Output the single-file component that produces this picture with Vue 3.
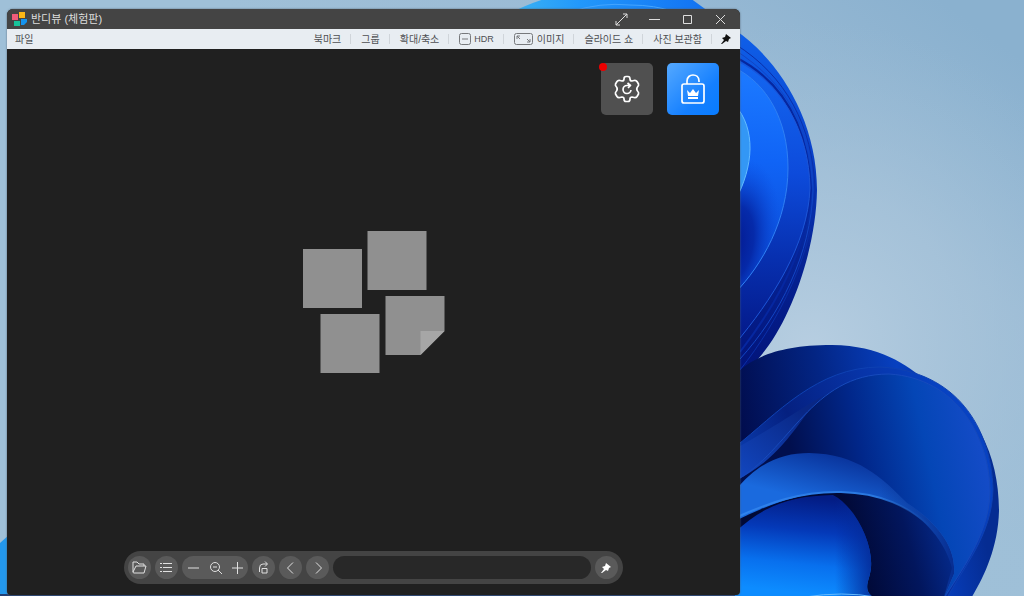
<script setup>
import { ref } from 'vue'

const fileLabel = '파일'
const title = '반디뷰 (체험판)'
const menus = [
  { label: '북마크' },
  { label: '그룹' },
  { label: '확대/축소' },
  { label: 'HDR', icon: 'hdr' },
  { label: '이미지', icon: 'fit' },
  { label: '슬라이드 쇼' },
  { label: '사진 보관함' },
]
const position = ref('')
</script>

<template>
  <div class="desktop">
    <svg class="wallpaper" viewBox="0 0 1024 596" preserveAspectRatio="xMaxYMin slice" aria-hidden="true">
      <defs>
        <linearGradient id="sky" gradientUnits="userSpaceOnUse" x1="1024" y1="60" x2="780" y2="400">
          <stop offset="0" stop-color="#8ab1cf" />
          <stop offset="0.5" stop-color="#9bbbd5" />
          <stop offset="1" stop-color="#9fc0d8" />
        </linearGradient>
        <radialGradient id="skyShade" gradientUnits="userSpaceOnUse" cx="810" cy="350" r="330">
          <stop offset="0" stop-color="#b7cee1" />
          <stop offset="0.5" stop-color="#a8c4da" stop-opacity="0.7" />
          <stop offset="1" stop-color="#9bbdd6" stop-opacity="0" />
        </radialGradient>
        <linearGradient id="topArc" x1="0" x2="1" y1="0" y2="0">
          <stop offset="0" stop-color="#3db4f2" />
          <stop offset="0.35" stop-color="#2298fb" />
          <stop offset="1" stop-color="#1170f2" />
        </linearGradient>
        <linearGradient id="outer" gradientUnits="userSpaceOnUse" x1="0" y1="30" x2="0" y2="370">
          <stop offset="0" stop-color="#0f60ea" />
          <stop offset="0.35" stop-color="#0a43cc" />
          <stop offset="0.65" stop-color="#062496" />
          <stop offset="1" stop-color="#02147a" />
        </linearGradient>
        <linearGradient id="middle" gradientUnits="userSpaceOnUse" x1="760" y1="60" x2="750" y2="340">
          <stop offset="0" stop-color="#1468f2" />
          <stop offset="0.4" stop-color="#0d4bdb" />
          <stop offset="0.7" stop-color="#0730b0" />
          <stop offset="1" stop-color="#041989" />
        </linearGradient>
        <linearGradient id="inner" gradientUnits="userSpaceOnUse" x1="770" y1="80" x2="755" y2="280">
          <stop offset="0" stop-color="#1b78ff" />
          <stop offset="0.4" stop-color="#1064f6" />
          <stop offset="1" stop-color="#0a48d2" />
        </linearGradient>
        <radialGradient id="innerShade" gradientUnits="userSpaceOnUse" cx="0" cy="0" r="1" gradientTransform="translate(732 245) rotate(12) scale(46 88)">
          <stop offset="0" stop-color="#03178c" />
          <stop offset="0.45" stop-color="#0423a0" stop-opacity="0.85" />
          <stop offset="1" stop-color="#0a4ade" stop-opacity="0" />
        </radialGradient>
        <linearGradient id="back" gradientUnits="userSpaceOnUse" x1="740" y1="440" x2="960" y2="400">
          <stop offset="0" stop-color="#010c4c" />
          <stop offset="0.4" stop-color="#032584" />
          <stop offset="0.75" stop-color="#0740c0" />
          <stop offset="1" stop-color="#052c92" />
        </linearGradient>
        <linearGradient id="fold" gradientUnits="userSpaceOnUse" x1="740" y1="460" x2="930" y2="370">
          <stop offset="0" stop-color="#0a3bac" />
          <stop offset="0.3" stop-color="#052080" />
          <stop offset="0.7" stop-color="#0734a8" />
          <stop offset="1" stop-color="#0742c2" />
        </linearGradient>
        <linearGradient id="bowl" gradientUnits="userSpaceOnUse" x1="800" y1="490" x2="990" y2="450">
          <stop offset="0" stop-color="#010f4e" />
          <stop offset="0.35" stop-color="#01278a" />
          <stop offset="0.68" stop-color="#0446b6" />
          <stop offset="1" stop-color="#164cc9" />
        </linearGradient>
        <linearGradient id="lip" gradientUnits="userSpaceOnUse" x1="740" y1="480" x2="800" y2="410">
          <stop offset="0" stop-color="#1247c0" />
          <stop offset="1" stop-color="#092785" />
        </linearGradient>
        <linearGradient id="band" gradientUnits="userSpaceOnUse" x1="820" y1="453" x2="808" y2="500">
          <stop offset="0" stop-color="#0a369f" />
          <stop offset="1" stop-color="#1a6ade" />
        </linearGradient>
        <linearGradient id="bandFade" gradientUnits="userSpaceOnUse" x1="880" y1="0" x2="955" y2="0">
          <stop offset="0" stop-color="#06297f" stop-opacity="0" />
          <stop offset="1" stop-color="#072c90" />
        </linearGradient>
        <linearGradient id="rim" gradientUnits="userSpaceOnUse" x1="740" y1="0" x2="935" y2="0">
          <stop offset="0" stop-color="#2f83ee" />
          <stop offset="0.7" stop-color="#2a78e0" />
          <stop offset="1" stop-color="#1b50a8" stop-opacity="0" />
        </linearGradient>
        <linearGradient id="cave" gradientUnits="userSpaceOnUse" x1="860" y1="570" x2="955" y2="545">
          <stop offset="0" stop-color="#010936" />
          <stop offset="0.55" stop-color="#02165d" />
          <stop offset="1" stop-color="#052c90" />
        </linearGradient>
        <linearGradient id="core" gradientUnits="userSpaceOnUse" x1="800" y1="496" x2="790" y2="592">
          <stop offset="0" stop-color="#031c84" />
          <stop offset="0.35" stop-color="#0439b8" />
          <stop offset="0.7" stop-color="#0870ee" />
          <stop offset="1" stop-color="#0d8cff" />
        </linearGradient>
        <linearGradient id="coreShade" gradientUnits="userSpaceOnUse" x1="835" y1="0" x2="876" y2="0">
          <stop offset="0" stop-color="#042a9c" stop-opacity="0" />
          <stop offset="1" stop-color="#042a96" />
        </linearGradient>
      </defs>

      <rect width="1024" height="596" fill="url(#sky)" />
      <rect width="1024" height="596" fill="url(#skyShade)" />
      <path d="M508 14Q530 3 548-2H690L712 14Z" fill="url(#topArc)" />
      <path d="M570 12Q600 2 630 5Q655 5 675 12" fill="none" stroke="#45a5ff" />
      <path d="M0 543L10 534V596H0Z" fill="#2398ed" />
      <rect y="594" width="745" height="2" fill="#233f73" />

      <path d="M735 378V30C777 58 817 118 817 190C816 252 789 325 758 359L735 390Z" fill="url(#outer)" />
      <path d="M735 44C786 76 813 126 815 190C814 252 779 321 740 370" fill="none" stroke="#0a2fa9" />
      <path d="M735 50C786 83 811 126 813 190C811 254 780 315 740 359" fill="none" stroke="#1245c4" />
      <path d="M735 57C783 81 808 126 811 190C807 248 778 303 740 352" fill="none" stroke="#0627a0" stroke-width="2" />
      <path d="M735 60C782 82 809 132 810 188C808 245 771 301 735 344Z" fill="url(#middle)" stroke="#1c56d8" />
      <path d="M735 68C766 83 788 119 788 168C788 220 762 265 735 293Z" fill="url(#inner)" />
      <path d="M735 68C766 83 788 119 788 168C788 220 762 265 735 293Z" fill="url(#innerShade)" stroke="#2f80f4" />
      <path d="M735 105C756 129 754 166 735 201Z" fill="#3397f5" stroke="#64bcff" />

      <path d="M735 375C748 361 773 345 832 345C882 346 903 363 930 383C976 408 999 454 999 511C998 549 983 579 970 600H735Z" fill="url(#back)" />
      <path d="M735 447C777 414 817 367 880 367C956 371 991 427 993 489C992 536 963 567 946 600H735Z" fill="url(#fold)" stroke="#0e41b2" />
      <path d="M735 481C787 451 811 374 889 374C957 378 990 438 990 492C989 536 959 573 943 600H735Z" fill="url(#bowl)" />
      <path d="M735 449C769 430 799 410 826 394C801 411 790 454 735 481Z" fill="url(#lip)" />
      <path d="M735 481C790 451 811 374 889 374C957 378 990 438 990 492C989 536 959 573 943 600" fill="none" stroke="#164abc" />
      <path d="M735 491C758 462 783 453 809 453C858 454 881 477 907 503C942 526 956 550 954 574L943 600L735 540Z" fill="url(#band)" />
      <path d="M735 491C758 462 783 453 809 453C858 454 881 477 907 503C942 526 956 550 954 574L943 600L735 540Z" fill="url(#bandFade)" />
      <path d="M735 521C768 505 801 491 841 492C908 494 942 532 952 568L943 600H735Z" fill="url(#cave)" />
      <path d="M735 518C768 503 801 491 841 492C882 493 908 507 929 525" fill="none" stroke="url(#rim)" stroke-width="2" />
      <path d="M735 532C765 505 790 496 833 495C856 507 873 544 871 567C870 582 860 590 877 600H735Z" fill="url(#core)" />
      <path d="M735 532C765 505 790 496 833 495C856 507 873 544 871 567C870 582 860 590 877 600H735Z" fill="url(#coreShade)" />
      <path d="M805 597Q842 591 876 597" fill="none" stroke="#65baff" />
    </svg>

    <main class="window">
      <header class="titlebar">
        <svg class="app-icon" width="15" height="15" viewBox="0 0 15 15" aria-hidden="true">
          <path fill="#f15b7b" d="M0 2h6v6H0z" />
          <path fill="#fbb615" d="M7 0h6v6H7z" />
          <path fill="#18c39a" d="M2 9h6v5H2z" />
          <path fill="#1593ee" d="M9 7h6v3l-3 3H9z" />
        </svg>
        <h1>{{ title }}</h1>
        <div class="controls">
          <button aria-label="전체 화면"><svg width="13" height="13" viewBox="0 0 13 13"><path d="M8 1h4v4M12 1L1 12M1 8v4h4" /></svg></button>
          <button aria-label="최소화"><svg width="13" height="13" viewBox="0 0 13 13"><path d="M1 6.500h11" /></svg></button>
          <button aria-label="최대화"><svg width="13" height="13" viewBox="0 0 13 13"><path d="M2.500 2.500h8v8h-8z" /></svg></button>
          <button aria-label="닫기"><svg width="13" height="13" viewBox="0 0 13 13"><path d="M2 2l9 9M11 2L2 11" /></svg></button>
        </div>
      </header>

      <nav class="menubar">
        <button class="menu file"><span>{{ fileLabel }}</span></button>
        <button v-for="m in menus" :key="m.label" class="menu item" :class="m.icon">
          <svg v-if="m.icon === 'hdr'" width="12" height="12" viewBox="0 0 12 12" aria-hidden="true">
            <rect x="0.500" y="0.500" width="11" height="11" rx="2" /><path d="M3 6h6" />
          </svg>
          <svg v-if="m.icon === 'fit'" width="19" height="12" viewBox="0 0 19 12" aria-hidden="true">
            <rect x="0.500" y="0.500" width="18" height="11" rx="2" />
            <path d="M3 6V3h3M3 3l3 3M16 6v3h-3M16 9l-3-3" />
          </svg>
          <span>{{ m.label }}</span>
        </button>
        <button class="menu pin" aria-label="메뉴 고정">
          <svg width="10" height="10" viewBox="0 0 10 10"><path d="M5 0L10 4L8 5L7 8L5 7L1 10L0 10L3 6L1 4L4 3Z" /></svg>
        </button>
      </nav>

      <section class="viewer">
        <div class="actions">
          <button class="action update" aria-label="업데이트 설정">
            <svg width="26" height="28" viewBox="0 0 26 28">
              <path d="M10 4Q10 1.500 12 1.500H14Q16 1.500 16 4Q16 6 18 6L20 5.500Q22 5 23 6.500L24.500 9Q25 10.500 23.500 12Q22 14 23.500 16Q25 17.500 24.500 19L23 21.500Q22 23 20 22.500L18 22Q16 22 16 24Q16 26.500 14 26.500H12Q10 26.500 10 24Q10 22 8 22L6 22.500Q4 23 3 21.500L1.500 19Q1 17.500 2.500 16Q4 14 2.500 12Q1 10.500 1.500 9L3 6.500Q4 5 6 5.500L8 6Q10 6 10 4Z" />
              <path d="M17 15A4 4 0 1 1 13 10.500H16M13.500 8L16.500 10.500L14 13" />
            </svg>
            <span class="dot"></span>
          </button>
          <button class="action unlock" aria-label="잠금 해제">
            <svg width="24" height="30" viewBox="0 0 24 30">
              <rect x="1" y="10" width="22" height="19" rx="2" />
              <path d="M6 10V7C6 3 9 1 12 1C15 1 18 3 18 7V8" />
              <path class="crown" d="M6 16L9 19L12 15L15 19L18 16L17 22H7ZM7 23H17V25H7Z" />
            </svg>
          </button>
        </div>

        <div class="empty">
          <svg width="142" height="142" viewBox="0 0 142 142" aria-hidden="true">
            <g fill="#909090">
              <path d="M0 18h59v59H0z" /><path d="M64.500 0h59v59h-59z" />
              <path d="M17.500 83h59v59h-59z" /><path d="M82.500 65h59v35l-24 24h-35z" />
            </g>
            <path fill="#a6a6a6" d="M117.500 100h24l-24 24z" />
          </svg>
        </div>

        <div class="toolbar" role="toolbar" aria-label="보기 도구">
          <button class="tool" aria-label="열기"><svg width="15" height="13" viewBox="0 0 15 13"><path d="M1 11V1H5L7 3H12V5M1 11L4 5H14L12 12H2Q1 12 1 11" /></svg></button>
          <button class="tool" aria-label="목록"><svg width="13" height="11" viewBox="0 0 13 11"><path d="M0 1.500h2M0 5.500h2M0 9.500h2M3 1.500h9M3 5.500h9M3 9.500h9" /></svg></button>
          <div class="zoom">
            <button aria-label="축소"><svg width="12" height="12" viewBox="0 0 12 12"><path d="M1 6h11" /></svg></button>
            <button aria-label="배율"><svg width="13" height="13" viewBox="0 0 13 13"><circle cx="6" cy="6" r="4.500" /><path d="M9 9l4 4M4 6h4" /></svg></button>
            <button aria-label="확대"><svg width="12" height="12" viewBox="0 0 12 12"><path d="M1 6h11M6.500 0v12" /></svg></button>
          </div>
          <button class="tool" aria-label="회전"><svg width="11" height="13" viewBox="0 0 11 13"><path d="M4 7.500h5v4.500H4zM1.500 11V7Q1.500 3 5 3H9M7 0.500L9.500 3L7 5.500" /></svg></button>
          <button class="tool" aria-label="이전"><svg width="12" height="12" viewBox="0 0 12 12"><path d="M8 0.500L2.500 6L8 11.500" /></svg></button>
          <button class="tool" aria-label="다음"><svg width="12" height="12" viewBox="0 0 12 12"><path d="M4 0.500L9.500 6L4 11.500" /></svg></button>
          <input v-model="position" class="track" type="text" aria-label="파일 위치" />
          <button class="tool solid" aria-label="도구 고정"><svg width="10" height="10" viewBox="0 0 10 10"><path d="M5 0L10 4L8 5L7 8L5 7L1 10L0 10L3 6L1 4L4 3Z" /></svg></button>
        </div>
      </section>
    </main>
  </div>
</template>

<style>
body {
  margin: 0;
}
</style>

<style scoped>
.desktop {
  position: relative;
  display: flex;
  box-sizing: border-box;
  min-height: 100vh;
  padding: 9px 284px 1px 7px;
  overflow: hidden;
  font-family: "Liberation Sans", "Noto Sans CJK KR", sans-serif;
}

.wallpaper {
  position: absolute;
  inset: 0;
  width: 100%;
  height: 100%;
}

.window {
  position: relative;
  display: flex;
  flex: 1;
  flex-direction: column;
  min-width: 0;
  border-radius: 6px 6px 4px 4px;
  overflow: hidden;
  background: #202020;
  box-shadow: 0 0 2px #51616f;
}

button {
  display: flex;
  align-items: center;
  justify-content: center;
  padding: 0;
  border: 0;
  background: none;
  color: inherit;
  font: inherit;
}

svg {
  flex: none;
}

button svg {
  fill: none;
  stroke: currentColor;
}

.titlebar {
  display: flex;
  align-items: center;
  height: 20px;
  padding: 0 3px 0 5px;
  background: #444;
  color: #dedede;
}

h1 {
  flex: 1;
  margin: 0 0 0 4px;
  font-size: 11px;
  font-weight: 400;
  line-height: 20px;
}

.controls {
  display: flex;
}

.controls button {
  width: 33px;
  height: 20px;
}

.menubar {
  display: flex;
  align-items: center;
  height: 20px;
  background: #e8edf2;
  color: #4d4f52;
  font-size: 10px;
}

.menu {
  height: 20px;
  line-height: 16px;
  white-space: nowrap;
}

.menu span {
  padding-top: 2px;
}

.menu.hdr span {
  padding-top: 0;
}

.file {
  margin-right: auto;
  padding: 0 8px;
}

.item {
  position: relative;
  gap: 3px;
  padding: 0 10px;
}

.item::after {
  content: "";
  position: absolute;
  top: 5px;
  right: 0;
  width: 1px;
  height: 10px;
  background: #d0d5da;
}

.item svg {
  color: #77797c;
}

.hdr {
  font-size: 9px;
}

.fit {
  gap: 4px;
}

.pin {
  width: 28px;
}

.pin svg,
.solid svg {
  fill: currentColor;
  stroke: none;
}

.pin svg {
  color: #111;
}

.viewer {
  display: flex;
  flex: 1;
  flex-direction: column;
  padding-bottom: 11px;
}

.actions {
  display: flex;
  justify-content: flex-end;
  gap: 14px;
  padding: 14px 21px 0 0;
}

.action {
  position: relative;
  width: 52px;
  height: 52px;
  border-radius: 5px;
  color: #fff;
}

.action svg {
  stroke-width: 1.7;
  stroke-linejoin: round;
}

.update {
  background: #505050;
}

.unlock {
  background: linear-gradient(135deg, #55a9ff, #147fff 65%, #087cff);
}

.action .crown {
  fill: #fff;
  stroke: none;
}

.dot {
  position: absolute;
  top: 0;
  left: -2px;
  width: 8px;
  height: 8px;
  border-radius: 50%;
  background: #ed0000;
}

.empty {
  display: flex;
  flex: 1;
  align-items: center;
  justify-content: center;
  padding-bottom: 62px;
}

.toolbar {
  display: flex;
  align-items: center;
  align-self: center;
  box-sizing: border-box;
  gap: 4px;
  width: 68%;
  height: 33px;
  padding: 0 5px 0 4px;
  border-radius: 17px;
  background: #444;
  color: #e0e0e0;
}

.tool {
  flex: none;
  width: 23px;
  height: 23px;
  border-radius: 50%;
  background: #5a5a5a;
}

.zoom {
  display: flex;
  flex: none;
  border-radius: 12px;
  background: #5a5a5a;
}

.zoom button {
  width: 22px;
  height: 23px;
}

.track {
  flex: 1;
  box-sizing: border-box;
  min-width: 0;
  height: 23px;
  padding: 0 12px;
  border: 0;
  border-radius: 12px;
  background: #282828;
  color: #ddd;
  font: inherit;
}

.solid {
  color: #fff;
}
</style>
